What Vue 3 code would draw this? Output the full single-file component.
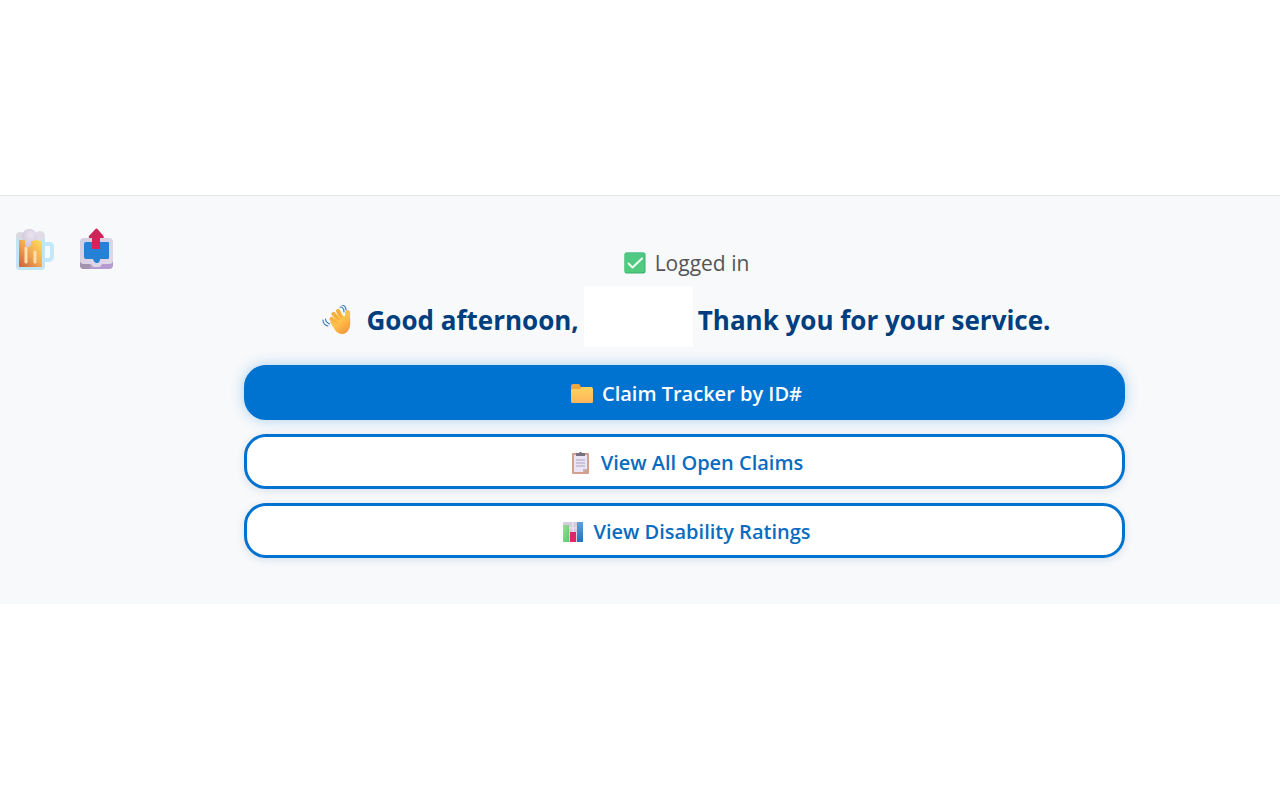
<script setup>
const actions = [
  { icon: 'folder', label: 'Claim Tracker by ID#', primary: true },
  { icon: 'clipboard', label: 'View All Open Claims', primary: false },
  { icon: 'chart', label: 'View Disability Ratings', primary: false }
]
</script>

<template>
  <div class="page">
    <section class="panel">
      <nav class="tools">
        <button class="tool" type="button" aria-label="Buy me a beer">
          <svg viewBox="0 0 40 44" width="40" height="44">
            <defs>
              <linearGradient id="beer" x1="1" y1="0" x2="0" y2="1">
                <stop offset="0" stop-color="#ffe05e" />
                <stop offset=".5" stop-color="#f2a653" />
                <stop offset="1" stop-color="#c85f3a" />
              </linearGradient>
              <radialGradient id="foam" cx=".6" cy=".35" r=".7">
                <stop offset="0" stop-color="#e9e4f0" />
                <stop offset="1" stop-color="#cfc5da" />
              </radialGradient>
            </defs>
            <path d="M30 16h4q3 0 3 3v9q0 4-4 4h-3" fill="none" stroke="#c3e8fa" stroke-width="4" />
            <rect x="1" y="8" width="29" height="34" rx="4" fill="#bfe5f7" />
            <path d="M4 12h23v26q0 1-1 1H5q-1 0-1-1z" fill="url(#beer)" />
            <path d="M11 20v14M20 24v10" stroke="#ffdfac" stroke-width="3" stroke-linecap="round" />
            <circle cx="5" cy="8" r="4" fill="#d9d9e0" />
            <circle cx="25" cy="8" r="5" fill="#dfdce7" />
            <path d="M7 10a7.500 7.500 0 0 1 15-3q1 6-6 6v3a3 3 0 0 1-6 0v-4q-3 0-3-2z" fill="url(#foam)" />
          </svg>
        </button>
        <button class="tool" type="button" aria-label="Export">
          <svg viewBox="0 0 36 44" width="36" height="44">
            <defs>
              <linearGradient id="tray" x1="0" y1="0" x2="1" y2="1">
                <stop offset="0" stop-color="#d4cddd" />
                <stop offset="1" stop-color="#e2d8e9" />
              </linearGradient>
              <linearGradient id="arrow" x1="0" y1="0" x2="0" y2="1">
                <stop offset="0" stop-color="#c62757" />
                <stop offset="1" stop-color="#e01f59" />
              </linearGradient>
            </defs>
            <rect x="1" y="16" width="33" height="25" rx="4" fill="#b59bd0" />
            <path d="M1 34h10v7H5q-4 0-4-4z" fill="#a493ae" />
            <path d="M5 10h25q4 0 4 4v18q0 4-4 4h-7q-1 3-3 3h-5q-2 0-3-3H5q-4 0-4-4V14q0-4 4-4z" fill="url(#tray)" />
            <path d="M7 14h22q1 0 1 1v15q0 1-1 1h-8q0 4-3 4t-4-4H7q-2 0-2-2V16q0-2 2-2z" fill="#2481d5" />
            <path d="M16.500 1q1-1 2 0l6 7q1 2-1 2H21v11h-8V10h-2q-2 0-1-2z" fill="url(#arrow)" />
          </svg>
        </button>
      </nav>

      <main class="content">
        <p class="status">
          <svg viewBox="0 0 22 22" width="22" height="22" aria-hidden="true">
            <defs>
              <linearGradient id="check" x1="0" y1="0" x2="0" y2="1">
                <stop offset="0" stop-color="#4fc887" />
                <stop offset="1" stop-color="#50cc7c" />
              </linearGradient>
            </defs>
            <rect x=".5" y=".5" width="21" height="21" rx="2" fill="#3caf72" />
            <rect x=".5" y=".5" width="20" height="20" rx="2" fill="url(#check)" />
            <path d="M4.500 11.500l4 4L18 6.500" fill="none" stroke="#effff3" stroke-width="2" stroke-linecap="round" stroke-linejoin="round" />
          </svg>
          <span>Logged in</span>
        </p>

        <h1 class="greeting">
          <svg class="wave" viewBox="0 0 30 30" width="30" height="30" aria-hidden="true">
            <defs>
              <linearGradient id="hand" gradientUnits="userSpaceOnUse" x1="8" y1="6" x2="26" y2="28">
                <stop offset="0" stop-color="#f0a83c" />
                <stop offset=".5" stop-color="#ffc24a" />
                <stop offset="1" stop-color="#f2953c" />
              </linearGradient>
            </defs>
            <path d="M18 20L9.500 14M19 17L11.500 9M21 15L16 6" stroke="url(#hand)" stroke-width="4.200" stroke-linecap="round" />
            <path d="M8 17q2-2 4 1l3-7 8 0q0-7 3-6 3 1 2 7 1 8-1 12-2 5-7 5-4 0-7-4z" fill="url(#hand)" />
            <path d="M13 10l4 5M16 7l4 6M10 14l5 4" stroke="#e99b33" stroke-width=".7" stroke-linecap="round" />
            <path d="M18 2q4 0 4 5M20 0q4 1 4 5M1 15q0 5 5 6M3.500 14q0 3 4 5" fill="none" stroke="#3978b8" stroke-width="1.100" stroke-linecap="round" />
          </svg>
          <span>Good afternoon,</span>
          <span class="name"></span>
          <span>Thank you for your service.</span>
        </h1>

        <div class="actions">
          <button v-for="action in actions" :key="action.label" type="button" class="action" :class="{ primary: action.primary }">
            <svg v-if="action.icon === 'folder'" viewBox="0 0 22 22" width="22" height="22" aria-hidden="true">
              <defs>
                <linearGradient id="folder" x1="0" y1="0" x2="0" y2="1">
                  <stop offset="0" stop-color="#ffd35d" />
                  <stop offset="1" stop-color="#ffb65c" />
                </linearGradient>
              </defs>
              <path d="M0 3q0-2 2-2h6l2 3h10q1 0 1 1v4H0z" fill="#eba63f" />
              <path d="M0 7q0-1 2-1h7l2-2h9q2 0 2 2v13q0 1-2 1H2q-2 0-2-1z" fill="url(#folder)" />
            </svg>
            <svg v-else-if="action.icon === 'clipboard'" viewBox="0 0 22 22" width="22" height="22" aria-hidden="true">
              <rect x="2" y="1" width="17" height="21" rx="1" fill="#d3a08c" />
              <path d="M4 3h13v14l-4 3H4z" fill="#ebe4f4" />
              <path d="M13 20v-3h4z" fill="#bfadc6" />
              <path d="M6 8h9M6 11h9M6 14h9" stroke="#aaa3bd" stroke-width="1" />
              <path d="M6 1h3q0-1 1.500-1T12 1h3v3H6z" fill="#77717f" />
            </svg>
            <svg v-else viewBox="0 0 22 22" width="22" height="22" aria-hidden="true">
              <defs>
                <linearGradient id="green" x1="0" y1="0" x2="1" y2="1">
                  <stop offset="0" stop-color="#a1dc98" />
                  <stop offset="1" stop-color="#56c96c" />
                </linearGradient>
                <linearGradient id="blue" x1="0" y1="0" x2="0" y2="1">
                  <stop offset="0" stop-color="#5da2de" />
                  <stop offset="1" stop-color="#2771bd" />
                </linearGradient>
              </defs>
              <rect x="1" y="1" width="20" height="20" rx="1" fill="#d5ccdd" />
              <path d="M1 7h20M1 13h20M11 1v20" stroke="#eee9f3" stroke-width="1" />
              <rect x="1" y="4" width="6" height="17" fill="url(#green)" />
              <rect x="8" y="11" width="6" height="10" fill="#de2565" />
              <rect x="15" y="1" width="6" height="20" fill="url(#blue)" />
            </svg>
            <span>{{ action.label }}</span>
          </button>
        </div>
      </main>
    </section>
  </div>
</template>

<style>
body {
  margin: 0;
  background: #ffffff;
}
</style>

<style scoped>
.page {
  box-sizing: border-box;
  min-height: 100vh;
  padding-top: 195px;
  font-family: "Segoe UI", "Open Sans", sans-serif;
}

.panel {
  display: flex;
  border-top: 1px solid #e1e5ea;
  background: #f7f9fb;
}

.tools {
  box-sizing: border-box;
  display: flex;
  align-items: flex-start;
  flex: none;
  gap: 24px;
  width: 244px;
  padding: 32px 0 0 15px;
}

.tool {
  padding: 0;
  border: 0;
  background: none;
  cursor: pointer;
}

.tool svg,
.status svg,
.action svg,
.wave {
  display: block;
  flex: none;
}

.content {
  flex: 1;
  min-width: 0;
  padding: 52px 155px 46px 0;
}

.status {
  display: flex;
  align-items: center;
  justify-content: center;
  gap: 9px;
  margin: 0 0 8px;
  padding-left: 4px;
  color: #555555;
  font-size: 21px;
  line-height: 30px;
}

.greeting {
  display: flex;
  align-items: center;
  justify-content: center;
  margin: 0 0 12px;
  padding-left: 4px;
  color: #003e7e;
  font-size: 26px;
  font-weight: 700;
  line-height: 40px;
  white-space: nowrap;
}

.wave {
  margin-right: 14px;
}

.name {
  width: 109px;
  height: 61px;
  margin: 0 5px 6px;
  background: #ffffff;
}

.actions {
  display: flex;
  flex-direction: column;
  gap: 14px;
}

.action {
  display: flex;
  align-items: center;
  justify-content: center;
  gap: 9px;
  padding: 10px 18px 8px 22px;
  border: 3px solid #0073d0;
  border-radius: 22px;
  background: #ffffff;
  box-shadow: 0 2px 8px rgba(0, 60, 120, 0.12);
  color: #0a6cc0;
  font-family: inherit;
  font-size: 20px;
  font-weight: 600;
  line-height: 31px;
  cursor: pointer;
}

.action.primary {
  background: #0073d0;
  box-shadow: 0 0 14px rgba(0, 115, 208, 0.3);
  color: #ffffff;
}
</style>
